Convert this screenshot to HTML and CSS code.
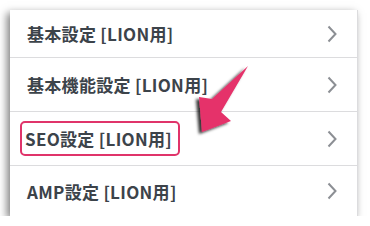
FILE: index.html
```html
<!DOCTYPE html>
<html lang="ja">
  <head>
    <meta charset="UTF-8" />
    <meta name="viewport" content="width=device-width, initial-scale=1.0" />
    <title>LION設定</title>
    <link rel="stylesheet" href="styles.css">
  </head>
  <body>
    <div class="menu">
      <a class="row first" href="#">
        <span class="label">基本設定 [LION用]</span>
        <svg class="chev" width="10" height="18" viewBox="0 0 10 18"><path d="M1.5 1.5 L8.5 9 L1.5 16.5" /></svg>
      </a>
      <a class="row" href="#">
        <span class="label">基本機能設定 [LION用]</span>
        <svg class="chev" width="10" height="18" viewBox="0 0 10 18"><path d="M1.5 1.5 L8.5 9 L1.5 16.5" /></svg>
      </a>
      <a class="row" href="#">
        <span class="label marked">SEO設定 [LION用]</span>
        <svg class="chev" width="10" height="18" viewBox="0 0 10 18"><path d="M1.5 1.5 L8.5 9 L1.5 16.5" /></svg>
      </a>
      <a class="row last" href="#">
        <span class="label">AMP設定 [LION用]</span>
        <svg class="chev" width="10" height="18" viewBox="0 0 10 18"><path d="M1.5 1.5 L8.5 9 L1.5 16.5" /></svg>
      </a>
    </div>
    <!-- pointer drawn over the list -->
    <svg class="pointer" width="370" height="226" viewBox="0 0 370 226">
      <defs>
        <filter id="drop" x="-50%" y="-50%" width="200%" height="200%">
          <feDropShadow dx="-3" dy="2" stdDeviation="1.6" flood-color="#000" flood-opacity="0.8" />
        </filter>
      </defs>
      <polygon points="248,66 212,99 199,97 202,132 231,121 221,112" fill="#e5336b" filter="url(#drop)" />
    </svg>
  </body>
</html>
```

FILE: styles.css
```css
body {
  margin: 0;
  background: #fff;
  font-family: "Noto Sans CJK JP", sans-serif;
}
.menu {
  margin: 10px 12px 0 10px;
  width: 348px;
  background: #fff;
  border-right: 1px solid #dcdcde;
  box-sizing: border-box;
  box-shadow: -3px 3px 8px rgba(0, 0, 0, 0.5);
}
.row {
  display: flex;
  align-items: center;
  justify-content: space-between;
  height: 54px;
  padding: 0 20px 0 17px;
  border-bottom: 1px solid #dcdcde;
  box-sizing: border-box;
  text-decoration: none;
  color: #3c434a;
}
.row.first {
  height: 48px;
}
.row.last {
  height: 50px;
  border-bottom: none;
}
.label {
  font-size: 17px;
  font-weight: bold;
  letter-spacing: 0.3px;
}
.marked {
  margin-left: -7px;
  padding: 3px 6px 3px 3px;
  border: 2px solid #e0346a;
  border-radius: 5px;
}
.chev path {
  fill: none;
  stroke: #8c8f94;
  stroke-width: 2;
}
.pointer {
  position: absolute;
  left: 0;
  top: 0;
}
```
